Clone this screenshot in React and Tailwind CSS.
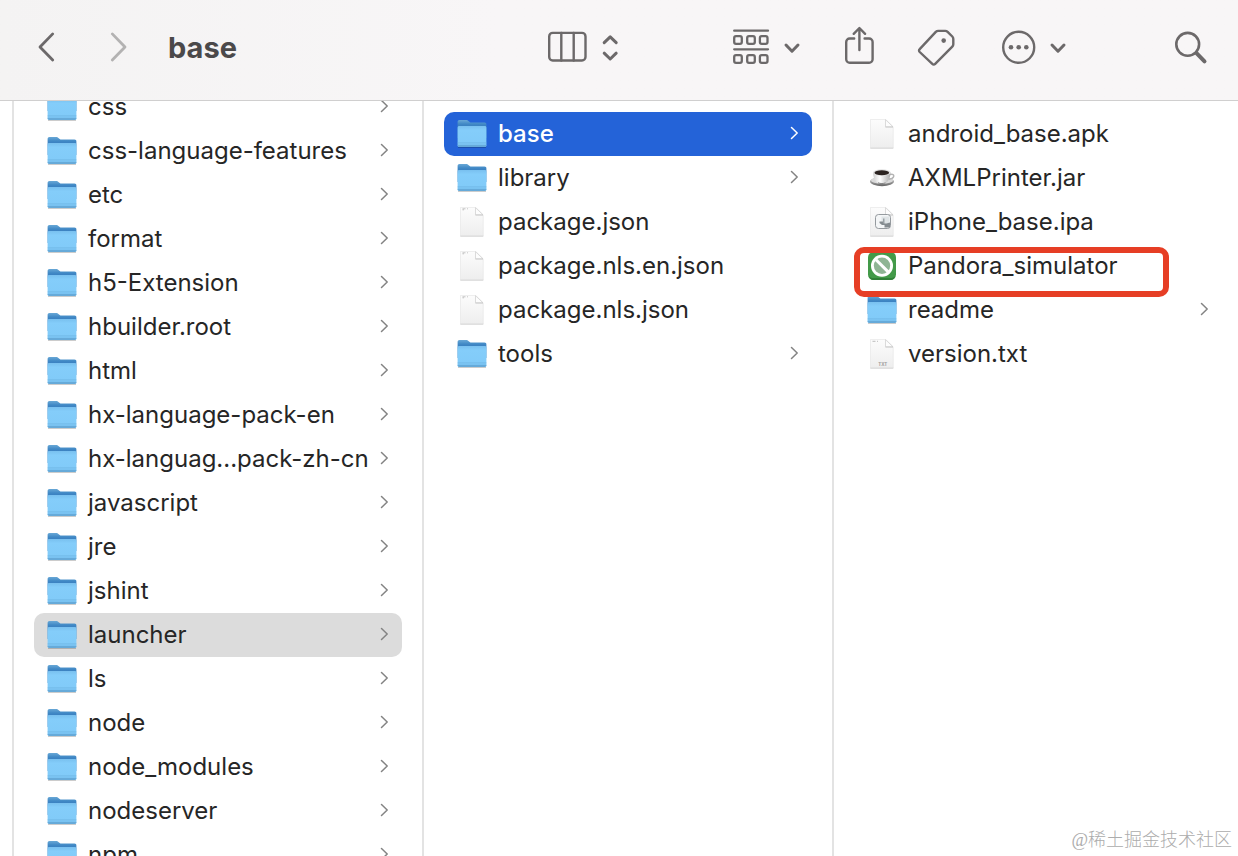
import React from "react";

const libraryFolders = [
  "css",
  "css-language-features",
  "etc",
  "format",
  "h5-Extension",
  "hbuilder.root",
  "html",
  "hx-language-pack-en",
  "hx-languag...pack-zh-cn",
  "javascript",
  "jre",
  "jshint",
  "launcher",
  "ls",
  "node",
  "node_modules",
  "nodeserver",
  "npm",
].map((name) => ({ name, kind: "folder", active: name === "launcher" }));

const launcherItems = [
  { name: "base", kind: "folder", selected: true },
  { name: "library", kind: "folder" },
  { name: "package.json", kind: "file" },
  { name: "package.nls.en.json", kind: "file" },
  { name: "package.nls.json", kind: "file" },
  { name: "tools", kind: "folder" },
];

const baseItems = [
  { name: "android_base.apk", kind: "blank" },
  { name: "AXMLPrinter.jar", kind: "jar" },
  { name: "iPhone_base.ipa", kind: "ipa" },
  { name: "Pandora_simulator", kind: "app", marked: true },
  { name: "readme", kind: "folder" },
  { name: "version.txt", kind: "txt" },
];

function Gradients() {
  return (
    <svg className="absolute h-0 w-0" aria-hidden="true">
      <defs>
        <linearGradient id="folderBack" x1="0" y1="0" x2="0" y2="1">
          <stop offset="0" stopColor="#69a8d6" />
          <stop offset="0.22" stopColor="#4189c6" />
          <stop offset="0.35" stopColor="#3a80c0" />
          <stop offset="1" stopColor="#3f8ac8" />
        </linearGradient>
        <linearGradient id="folderFront" x1="0" y1="0" x2="0" y2="1">
          <stop offset="0" stopColor="#79c0ef" />
          <stop offset="0.2" stopColor="#84cdfa" />
          <stop offset="1" stopColor="#80caf8" />
        </linearGradient>
        <linearGradient id="paper" x1="0" y1="0" x2="0" y2="1">
          <stop offset="0" stopColor="#fcfcfc" />
          <stop offset="1" stopColor="#eeeeee" />
        </linearGradient>
        <linearGradient id="cup" x1="0" y1="0" x2="1" y2="0">
          <stop offset="0" stopColor="#cfcfcf" />
          <stop offset="0.4" stopColor="#ffffff" />
          <stop offset="1" stopColor="#a9a9a9" />
        </linearGradient>
        <linearGradient id="saucer" x1="0" y1="0" x2="0" y2="1">
          <stop offset="0" stopColor="#dcdcdc" />
          <stop offset="1" stopColor="#636363" />
        </linearGradient>
      </defs>
    </svg>
  );
}

function FolderIcon() {
  return (
    <>
      <path d="M2 28.8h28v1.200H2z" fill="#000" opacity="0.2" />
      <path
        d="M1.600 4c0-1.200.7-2 1.900-2h6.700c1 0 1.500.3 2.200.9l1.300 1.100c.5.400 1 .6 1.700.6h13.100c1.200 0 1.900.7 1.900 1.900V20H1.600z"
        fill="url(#folderBack)"
      />
      <path
        d="M1.600 9.800c0-1 .6-1.700 1.600-1.700h25.600c1 0 1.600.7 1.600 1.700v17.400c0 1-.7 1.700-1.700 1.700H3.300c-1 0-1.700-.7-1.700-1.700z"
        fill="url(#folderFront)"
      />
      <path d="M1.600 26.800h28.800v.4c0 1-.7 1.700-1.700 1.700H3.300c-1 0-1.700-.7-1.700-1.700z" fill="#66aad9" />
      <path d="M1.600 24.900h28.800" stroke="#6cb2e0" strokeWidth="0.700" />
    </>
  );
}

function Paper() {
  return (
    <>
      <path d="M4.500 1.500h15.500l7.200 7.500v21H4.500z" fill="url(#paper)" stroke="#e6e6e6" strokeWidth="0.700" />
      <path d="M4.300 30.200h23" stroke="#d2d2d2" strokeWidth="0.900" />
      <path d="M19.500 1.700v7.100h7.500z" fill="#fdfdfd" stroke="#cdcdcd" strokeWidth="0.700" />
      <path d="M19.500 9.100h7.500" stroke="#c4c4c4" strokeWidth="0.700" />
    </>
  );
}

function ItemIcon({ kind }) {
  return (
    <svg className="h-8 w-8 shrink-0" viewBox="0 0 32 32" fill="none" aria-hidden="true">
      {kind === "folder" && <FolderIcon />}
      {kind === "blank" && <Paper />}
      {kind === "file" && (
        <>
          <Paper />
          <path d="M6.500 2.800h3M6.500 3.800h1.500M11 2.800h1" stroke="#b5b5b5" strokeWidth="0.800" />
        </>
      )}
      {kind === "txt" && (
        <>
          <Paper />
          <path d="M6.500 3.300h3M11 3.300h1" stroke="#b5b5b5" strokeWidth="0.900" />
          <text x="12.200" y="27.500" fontSize="4.500" fontWeight="700" fill="#9b9b9b" fontFamily="Inter, sans-serif">
            TXT
          </text>
        </>
      )}
      {kind === "ipa" && (
        <>
          <Paper />
          <rect x="9.500" y="8.500" width="15" height="14" rx="3" fill="#f4f6f7" stroke="#8a9094" strokeWidth="0.900" />
          <path d="M15.500 10.500h8v8h-8z" fill="#dfe4e6" />
          <path d="M13.500 15.500h3.500l1.500 2h2l3.500-1v5h-5.500v-2.500h-2.500l-2.500-2z" fill="#858c90" />
          <path d="M17 12.500h1.500v5h-1.500z" fill="#9aa1a5" />
        </>
      )}
      {kind === "jar" && (
        <>
          <ellipse cx="16" cy="19.600" rx="11.900" ry="4.600" fill="url(#saucer)" />
          <ellipse cx="16" cy="18.400" rx="11" ry="3.500" fill="#dadada" />
          <path d="M24 12.600c2.800-.8 4.200.2 3.700 1.900-.5 1.600-2.400 2.500-4.700 2.800" stroke="#b4b4b4" strokeWidth="1.400" />
          <path d="M7 10.400c.2 5.400 2.500 9.800 5.300 10.700h6.700c3.100-.9 5.400-5.300 5.600-10.700z" fill="url(#cup)" />
          <path d="M12 20.800c2.500 1 5.500 1 7.500 0" stroke="#858585" strokeWidth="1" />
          <ellipse cx="15.800" cy="10.500" rx="8.800" ry="3.200" fill="#e2e2e2" />
          <ellipse cx="15.800" cy="10.700" rx="7.300" ry="2.500" fill="#2b2320" />
        </>
      )}
      {kind === "app" && (
        <>
          <rect x="2" y="2" width="28" height="28" rx="5.500" fill="#439a49" />
          <path d="M2.800 26c.7 2.400 2.300 4 4.700 4h17c2.400 0 4-1.600 4.700-4-1.200 1.500-2.700 2-4.700 2h-17c-2 0-3.500-.5-4.700-2z" fill="#318038" />
          <circle cx="16" cy="15.700" r="11" fill="#fff" />
          <circle cx="16" cy="15.700" r="8.200" fill="#8fb594" />
          <path d="M10 9.700l12.200 12.200" stroke="#fff" strokeWidth="3" />
        </>
      )}
    </svg>
  );
}

function Row({ item }) {
  const tone = item.selected
    ? "bg-[#2463d8] text-white font-medium"
    : item.active
      ? "bg-[#dcdcdc] text-[#262626]"
      : "text-[#262626]";
  const arrow = item.selected ? "text-white" : "text-[#838383]";
  return (
    <li className="relative">
      <button type="button" className={`flex h-11 w-full items-center rounded-[10px] px-3 text-left ${tone}`}>
        <ItemIcon kind={item.kind} />
        <span className="ml-2.5 min-w-0 flex-1 whitespace-nowrap">{item.name}</span>
        {item.kind === "folder" && (
          <svg className={`h-4 w-2.5 shrink-0 ${arrow}`} viewBox="0 0 10 16" fill="none" aria-hidden="true">
            <path d="M1.500 1.500l5.700 5.500-5.700 5.500" stroke="currentColor" strokeWidth="1.500" strokeLinecap="round" strokeLinejoin="round" />
          </svg>
        )}
      </button>
      {item.marked && (
        <span className="pointer-events-none absolute top-[3px] left-0 z-10 h-[50px] w-[315px] rounded-[10px] border-[6px] border-[#e63e25]" />
      )}
    </li>
  );
}

function Column({ label, items, className }) {
  return (
    <section aria-label={label} className="min-w-0 overflow-hidden border-l-2 border-[#e3e3e3]">
      <ul className={className}>
        {items.map((item) => (
          <Row key={item.name} item={item} />
        ))}
      </ul>
    </section>
  );
}

function Glyph({ className, box, width = 2.4, children }) {
  return (
    <svg
      className={`h-11 shrink-0 ${className}`}
      viewBox={box}
      fill="none"
      stroke="currentColor"
      strokeWidth={width}
      strokeLinecap="round"
      strokeLinejoin="round"
      aria-hidden="true"
    >
      {children}
    </svg>
  );
}

function ChevronDown() {
  return (
    <Glyph className="w-5" box="0 0 20 44" width={3}>
      <path d="M4 19l6 6.200 6-6.200" />
    </Glyph>
  );
}

function Toolbar() {
  return (
    <header className="flex h-[101px] shrink-0 items-center border-b border-[#d0cfcf] bg-linear-to-r from-[#f4f3f3] to-[#f8f6f7] to-40% pr-[30px] pb-1 pl-9 text-[#6c696a]">
      <div className="flex flex-1 items-center">
        <button type="button" aria-label="Back">
          <Glyph className="w-5" box="0 0 20 44" width={2.8}>
            <path d="M16.700 7.900L4 21l12.700 13" />
          </Glyph>
        </button>
        <button type="button" aria-label="Forward" className="ml-13 text-[#b3b2b2]">
          <Glyph className="w-5" box="0 0 20 44" width={2.8}>
            <path d="M4.300 7.900L17 21 4.300 34" />
          </Glyph>
        </button>
        <h1 className="ml-10 text-[29px] leading-9 font-bold text-[#4b494a]">base</h1>
      </div>
      <button type="button" aria-label="Column view" className="flex gap-2.5">
        <Glyph className="w-11" box="0 0 44 44">
          <rect x="3.200" y="6.900" width="36.300" height="27.600" rx="3.500" />
          <path d="M15.300 7v27.500M27.700 7v27.500" />
        </Glyph>
        <Glyph className="w-5" box="0 0 20 44" width={3}>
          <path d="M4.200 16.700l6-5.800 6 5.800M4.200 27.200l6 5.800 6-5.800" />
        </Glyph>
      </button>
      <div className="ml-28 flex gap-10">
        <button type="button" aria-label="Group by" className="flex gap-2.5">
          <Glyph className="w-10" box="1 0 40 44" width={2.3}>
            <path d="M3.200 4.700H37M3.200 23.300H37" />
            <rect x="3.200" y="10.200" width="7.600" height="7.600" rx="1.800" />
            <rect x="16.200" y="10.200" width="7.600" height="7.600" rx="1.800" />
            <rect x="28.900" y="10.200" width="7.600" height="7.600" rx="1.800" />
            <rect x="3.200" y="29.200" width="7.600" height="7.600" rx="1.800" />
            <rect x="16.200" y="29.200" width="7.600" height="7.600" rx="1.800" />
            <rect x="28.900" y="29.200" width="7.600" height="7.600" rx="1.800" />
          </Glyph>
          <ChevronDown />
        </button>
        <button type="button" aria-label="Share">
          <Glyph className="w-[34px]" box="-1 0 34 44">
            <path d="M11.200 12.500H6.700a3.500 3.500 0 0 0-3.500 3.500v17.300a3.500 3.500 0 0 0 3.500 3.500h19.400a3.500 3.500 0 0 0 3.500-3.500V16a3.500 3.500 0 0 0-3.500-3.500h-4.500" />
            <path d="M16.400 24V2.200M10.700 7.800l5.700-5.800 5.700 5.800" />
          </Glyph>
        </button>
        <button type="button" aria-label="Edit tags">
          <Glyph className="w-11" box="0 0 44 44">
            <path d="M22.200 4.900h7c1 0 1.700.3 2.400 1l4.700 4.600c.7.700 1 1.400 1 2.400v5.400c0 1-.3 1.700-1 2.400L19.200 37.900c-.9.900-2 .9-2.900 0L3.700 26c-.9-.9-.9-2 0-2.900L19.800 5.900c.7-.7 1.400-1 2.400-1z" />
            <circle cx="27.700" cy="14.600" r="2.300" fill="currentColor" stroke="none" />
          </Glyph>
        </button>
        <button type="button" aria-label="More actions" className="flex gap-2.5">
          <Glyph className="w-[38px]" box="0 0 38 44">
            <circle cx="18.700" cy="21.300" r="15.500" />
            <g fill="currentColor" stroke="none">
              <circle cx="11" cy="21.300" r="2.300" />
              <circle cx="18.700" cy="21.300" r="2.300" />
              <circle cx="26.300" cy="21.300" r="2.300" />
            </g>
          </Glyph>
          <ChevronDown />
        </button>
      </div>
      <button type="button" aria-label="Search" className="ml-26">
        <Glyph className="w-9" box="0 0 36 44" width={2.6}>
          <circle cx="15.700" cy="18.300" r="11.400" />
          <path d="M24.500 27.200l8 8.200" strokeWidth="4" />
        </Glyph>
      </button>
    </header>
  );
}

export default function App() {
  return (
    <div className="relative flex h-screen flex-col overflow-hidden bg-white font-['Inter','Noto_Sans_CJK_SC',sans-serif] text-2xl">
      <Gradients />
      <Toolbar />
      <main className="grid min-h-0 flex-1 grid-cols-[12px_410fr_410fr_406fr]">
        <div />
        <Column label="Plugins" items={libraryFolders} className="-mt-4 px-5" />
        <Column label="launcher" items={launcherItems} className="px-5 pt-[11px]" />
        <Column label="base" items={baseItems} className="pt-[11px] pr-4 pl-5" />
      </main>
      <p className="absolute right-1.5 bottom-1 font-['Liberation_Serif','Noto_Sans_CJK_SC',serif] text-lg leading-6 font-light text-[#acacac]">
        @稀土掘金技术社区
      </p>
    </div>
  );
}
